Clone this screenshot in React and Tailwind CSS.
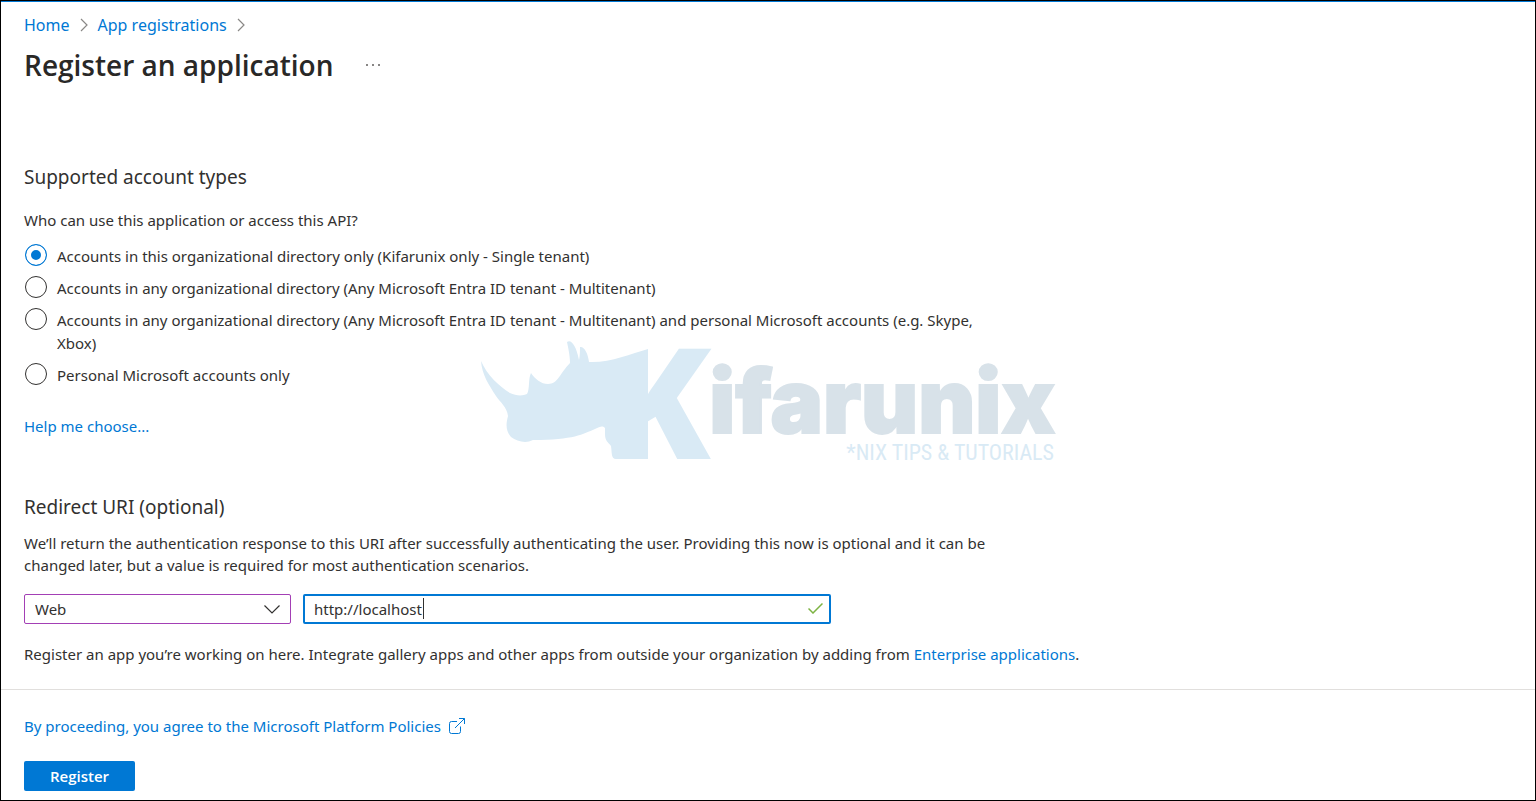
import { useState } from "react";

const ACCOUNT_TYPES = [
  {
    value: "single",
    label:
      "Accounts in this organizational directory only (Kifarunix only - Single tenant)",
  },
  {
    value: "multi",
    label:
      "Accounts in any organizational directory (Any Microsoft Entra ID tenant - Multitenant)",
  },
  {
    value: "multi-personal",
    label:
      "Accounts in any organizational directory (Any Microsoft Entra ID tenant - Multitenant) and personal Microsoft accounts (e.g. Skype, Xbox)",
  },
  { value: "personal", label: "Personal Microsoft accounts only" },
];

const PLATFORMS = ["Web", "Single-page application (SPA)", "Public client/native"];

function BreadcrumbArrow() {
  return (
    <svg width="8" height="14" viewBox="0 0 8 14" fill="none" stroke="#8a8886" aria-hidden="true">
      <path d="M1 1l6 6-6 6" strokeWidth="1.2" />
    </svg>
  );
}

function ExternalLinkIcon() {
  return (
    <svg width="16" height="16" viewBox="0 0 16 16" fill="none" stroke="#0078d4" aria-hidden="true">
      <path d="M8 3.5H2.5a2 2 0 0 0-2 2v8a2 2 0 0 0 2 2h7a2 2 0 0 0 2-2V8.500" />
      <path d="M6 10L15.500.500M10 .5h5.500V6" />
    </svg>
  );
}

function Watermark() {
  return (
    <div className="pointer-events-none absolute inset-0 flex items-center justify-center">
      <svg width="576" height="122" viewBox="480 340 576 122" className="overflow-visible" aria-hidden="true">
        <clipPath id="k-arms">
          <rect x="647" y="340" width="80" height="122" />
        </clipPath>
        <g fill="#d9eaf5">
          <path d="M481 361C487 375 499 386 510 393C516 396 523 396 527 394C530 389 528 379 531 373C535 379 541 384 548 384C558 384 560 373 570 363C570 355 568 347 567 342C571 339 576 345 579 360C580 356 580 350 580 347C584 346 588 353 589 362C610 363 630 354 648 349V459H616C611 459 612 453 611 446C608 442 605 441 605 434V428C602 425 600 427 595 429C583 434 574 440 533 440C525 444 517 441 511 437C507 432 505 427 508 416C507 407 500 402 496 396C489 385 482 375 481 361Z" />
          <text x="605" y="459" fontSize="154" fontWeight="800" clipPath="url(#k-arms)" className="font-['Open_Sans',sans-serif]">
            K
          </text>
        </g>
        <text x="1055" y="433" fontSize="88" fontWeight="900" textAnchor="end" fill="#d8e2e9" stroke="#d8e2e9" strokeWidth="2" className="font-[Inter,sans-serif]">
          ifarunix
        </text>
        <text x="1054" y="460" fontSize="22" fontWeight="400" textAnchor="end" fill="#d9eaf5" className="font-['Roboto_Condensed',Roboto,sans-serif]">
          *NIX TIPS &amp; TUTORIALS
        </text>
      </svg>
    </div>
  );
}

export default function App() {
  const [accountType, setAccountType] = useState("single");
  const [platform, setPlatform] = useState("Web");
  const [redirectUri, setRedirectUri] = useState("http://localhost");

  return (
    <div className="relative min-h-screen border border-black bg-white font-['Noto_Sans',sans-serif] text-[15px] leading-[22px] text-[#323130]">
      <div className="h-px bg-[#0078d4]" />

      <header className="px-[23px] pt-3">
        <nav className="flex items-center gap-[10px] text-base leading-[22px]">
          <a href="#home" className="text-[#0078d4]">Home</a>
          <BreadcrumbArrow />
          <a href="#registrations" className="text-[#0078d4]">App registrations</a>
          <BreadcrumbArrow />
        </nav>
        <div className="mt-[9px] flex items-center gap-8">
          <h1 className="font-['Open_Sans',sans-serif] text-[28px] leading-10 font-semibold text-[#292827]">
            Register an application
          </h1>
          <button type="button" aria-label="More actions" className="flex h-6 items-center">
            <svg width="16" height="4" viewBox="0 0 16 4" fill="#605e5c">
              <circle cx="2" cy="2" r="1" />
              <circle cx="8" cy="2" r="1" />
              <circle cx="14" cy="2" r="1" />
            </svg>
          </button>
        </div>
      </header>

      <form onSubmit={(event) => event.preventDefault()}>
        <main className="px-[23px] pt-[78px] pb-6">
          <fieldset className="max-w-[984px]">
            <legend>
              <h2 className="text-[19px] leading-7">Supported account types</h2>
            </legend>
            <p className="mt-[18px]">Who can use this application or access this API?</p>
            <div className="mt-[13px] flex flex-col gap-2">
              {ACCOUNT_TYPES.map((type) => (
                <label key={type.value} className="flex items-start gap-[10px] leading-[23px]">
                  <input
                    type="radio"
                    name="accountType"
                    value={type.value}
                    checked={accountType === type.value}
                    onChange={() => setAccountType(type.value)}
                    className="ml-px size-[22px] shrink-0 appearance-none rounded-full border border-[#323130] bg-white checked:border-[#0078d4] checked:bg-[#0078d4] checked:shadow-[inset_0_0_0_5px_white]"
                  />
                  <span className="pt-px">{type.label}</span>
                </label>
              ))}
            </div>
          </fieldset>

          <a href="#help" className="mt-7 inline-block text-[#0078d4]">
            Help me choose...
          </a>

          <h2 className="mt-14 text-[19px] leading-7">Redirect URI (optional)</h2>
          <p className="mt-[11px] max-w-[984px]">
            We’ll return the authentication response to this URI after successfully
            authenticating the user. Providing this now is optional and it can be changed
            later, but a value is required for most authentication scenarios.
          </p>

          <div className="mt-[18px] flex gap-3">
            <div className="relative w-[267px]">
              <select
                aria-label="Platform"
                value={platform}
                onChange={(event) => setPlatform(event.target.value)}
                className="h-[30px] w-full appearance-none rounded-xs border border-[#a33fb5] bg-white px-[10px] outline-none"
              >
                {PLATFORMS.map((item) => (
                  <option key={item}>{item}</option>
                ))}
              </select>
              <svg width="16" height="9" viewBox="0 0 16 9" fill="none" stroke="#323130" className="pointer-events-none absolute top-[11px] right-[11px]" aria-hidden="true">
                <path d="M.5.5L8 8 15.500.500" strokeWidth="1.2" />
              </svg>
            </div>
            <div className="relative w-[528px]">
              <input
                type="text"
                aria-label="Redirect URI"
                value={redirectUri}
                onChange={(event) => setRedirectUri(event.target.value)}
                className="h-[30px] w-full rounded-xs border-2 border-[#0078d4] bg-white pr-8 pl-[9px] outline-none"
              />
              <span className="absolute top-1 left-[120px] h-[21px] w-px bg-[#323130]" />
              <svg width="15" height="11" viewBox="0 0 15 11" fill="none" stroke="#7db343" className="pointer-events-none absolute top-[9px] right-2" aria-hidden="true">
                <path d="M.5 5.500L5 10 14.500.500" strokeWidth="1.5" />
              </svg>
            </div>
          </div>

          <p className="mt-[19px]">
            Register an app you’re working on here. Integrate gallery apps and other apps from
            outside your organization by adding from{" "}
            <a href="#enterprise" className="text-[#0078d4]">Enterprise applications</a>.
          </p>
        </main>

        <footer className="border-t border-[#e1dfdd] px-[23px] pt-[25px] pb-[9px]">
          <a href="#policies" className="flex w-fit items-center gap-2 text-[#0078d4]">
            By proceeding, you agree to the Microsoft Platform Policies
            <ExternalLinkIcon />
          </a>
          <button type="submit" className="mt-6 block h-[30px] w-[111px] rounded-xs bg-[#0078d4] font-['Open_Sans',sans-serif] font-semibold text-white">
            Register
          </button>
        </footer>
      </form>

      <Watermark />
    </div>
  );
}
